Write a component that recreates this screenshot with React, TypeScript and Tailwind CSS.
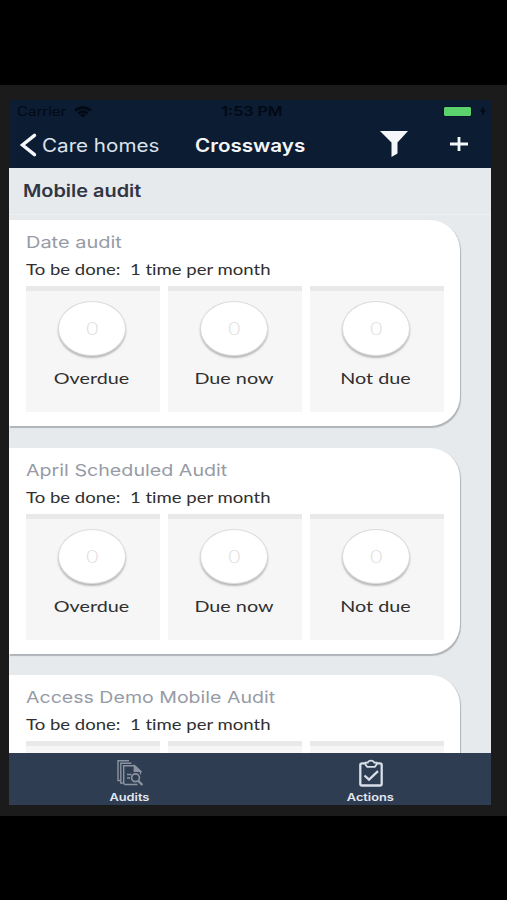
import type { ReactNode } from "react";

type Audit = {
  id: number;
  title: string;
  titleScale: string;
  frequency: string;
  overdue: number;
  dueNow: number;
  notDue: number;
};

const audits: Audit[] = [
  { id: 1, title: "Date audit", titleScale: "scale-x-[1.21]", frequency: "1 time per month", overdue: 0, dueNow: 0, notDue: 0 },
  { id: 2, title: "April Scheduled Audit", titleScale: "scale-x-[1.192]", frequency: "1 time per month", overdue: 0, dueNow: 0, notDue: 0 },
  { id: 3, title: "Access Demo Mobile Audit", titleScale: "scale-x-[1.185]", frequency: "1 time per month", overdue: 0, dueNow: 0, notDue: 0 },
];

function StatusBar() {
  return (
    <div className="grid h-[22px] grid-cols-3 items-center pl-2 pr-1 text-[12.5px] text-[#020913]">
      <div className="flex items-center pt-0.5">
        <span className="w-[57px]">
          <span className="inline-block origin-left scale-x-[1.2]">Carrier</span>
        </span>
        <svg viewBox="0 0 18 12" className="h-3 w-[18px]" fill="none" stroke="currentColor" strokeWidth="2.6">
          <path d="M1.2 4.6C5.8.6 12.2.6 16.8 4.6" />
          <path d="M4.3 7.5c2.8-2.3 6.6-2.3 9.4 0" />
          <path d="M6.2 9 9 11.6 11.8 9C9.9 7.8 8.1 7.8 6.2 9Z" fill="currentColor" stroke="none" />
        </svg>
      </div>
      <span className="justify-self-center pt-0.5">
        <span className="inline-block scale-x-[1.28] font-semibold">1:53 PM</span>
      </span>
      <div className="flex items-center justify-end gap-2">
        <span className="h-[9px] w-[27px] rounded-[1px] bg-[#5bd26b] outline outline-[#07182a]" />
        <svg viewBox="0 0 8 10" className="h-2.5 w-2" fill="currentColor">
          <path d="M5 0 1 5.6h2.5L2.5 10 7 4.2H4.3Z" />
        </svg>
      </div>
    </div>
  );
}

function NavBar() {
  return (
    <div className="flex h-[46px] items-center text-[18px] text-[#f4f6f9]">
      <svg
        viewBox="0 0 18 24"
        className="ml-2.5 h-6 w-[18px]"
        fill="none"
        stroke="currentColor"
        strokeWidth="3.4"
        strokeLinecap="round"
      >
        <path d="M15.5 2.4 3.5 12l12 9.6" />
      </svg>
      <span className="ml-[5px] w-[153px]">
        <span className="inline-block origin-left scale-x-[1.145] text-[#dde3ec]">Care homes</span>
      </span>
      <span className="w-[185px]">
        <span className="inline-block origin-left scale-x-[1.145] font-semibold">Crossways</span>
      </span>
      <svg viewBox="0 0 28 26" className="mb-0.5 h-[26px] w-7" fill="currentColor">
        <path d="M0 0h28L17.5 11.5v11L11.5 26V11.5Z" />
      </svg>
      <svg viewBox="0 0 18 14" className="mb-0.5 ml-[42px] h-3.5 w-[18px]" stroke="currentColor" strokeWidth="2.8">
        <path d="M0 7h18M9 0v14" />
      </svg>
    </div>
  );
}

function CountTile({ count, label }: { count: number; label: string }) {
  return (
    <div className="flex h-[126px] w-[134px] flex-col items-center border-t-[5px] border-[#e9e9e9] bg-[#f6f6f6] pt-2.5 font-[Lato,sans-serif]">
      <div className="-ml-0.5 flex h-[55px] w-[68px] items-center justify-center rounded-[50%] border border-[#dcdcdc] bg-white shadow-[0_2px_2px_rgba(0,0,0,0.26)]">
        <span className="scale-x-[1.15] text-[18px] font-light text-[#dcdcdc]">{count}</span>
      </div>
      <span className="mt-2.5 -ml-[2px] scale-x-[1.235] text-[16px] leading-6 whitespace-nowrap text-[#303030]">{label}</span>
    </div>
  );
}

function AuditCard({ audit }: { audit: Audit }) {
  return (
    <div className="mb-[21.5px] h-[206px] w-[451px] shrink-0 rounded-r-[30px] bg-white pt-3 pl-[17px] shadow-[1px_1.5px_1px_#b0b4b7]">
      <p className="h-5 text-[16.5px] leading-5 text-[#969ba6]">
        <span className={`inline-block origin-left whitespace-nowrap ${audit.titleScale}`}>{audit.title}</span>
      </p>
      <p className="mt-[7px] h-5 font-[Lato,sans-serif] text-[15px] leading-5 text-[#303030]">
        <span className="inline-block origin-left scale-x-[1.235] whitespace-pre [font-variant-ligatures:none]">
          To be done:{"  "}{audit.frequency}
        </span>
      </p>
      <div className="mt-[7px] flex gap-2">
        <CountTile count={audit.overdue} label="Overdue" />
        <CountTile count={audit.dueNow} label="Due now" />
        <CountTile count={audit.notDue} label="Not due" />
      </div>
    </div>
  );
}

function Tab({ label, children }: { label: string; children: ReactNode }) {
  return (
    <div className="flex w-[241px] flex-col items-center pt-[6px]">
      {children}
      <span className="mt-[5px] scale-x-[1.22] text-[10.5px] leading-3 font-semibold text-[#e3e8ef]">{label}</span>
    </div>
  );
}

function TabBar() {
  return (
    <div className="flex h-[52px] shrink-0 bg-[#2f3d53]">
      <Tab label="Audits">
        <svg viewBox="0 0 26 28" className="h-7 w-[26px]" fill="none" stroke="#8b93a0" strokeWidth="1.4">
          <path d="M3.2 21.5H1V1.8h11" />
          <path d="M6 24H3.8V4.2h10.7" />
          <path d="M20.5 25.5H8.500A1.800 1.800 0 0 1 6.700 23.700V6.700h11l5.800 5.500v3" />
          <path d="M17.300 6.700v5.500h6.200Z" fill="#8b93a0" />
          <path d="M10 15.500h4.500M10 19h3" />
          <circle cx="18.500" cy="18.800" r="3.900" strokeWidth="1.700" />
          <path d="m21.400 22 4 4" strokeWidth="2.400" />
        </svg>
      </Tab>
      <Tab label="Actions">
        <svg viewBox="0 0 26 28" className="h-7 w-[26px]" fill="none" stroke="#d8dfe9" strokeWidth="2.3">
          <path d="M7.500 4.300H4A1.700 1.700 0 0 0 2.300 6v18.800a1.700 1.700 0 0 0 1.700 1.700h18a1.700 1.700 0 0 0 1.700-1.700V6A1.700 1.700 0 0 0 22 4.300H18.500" />
          <path d="M7.500 3.600h2.300c.8-2.600 5.600-2.600 6.400 0h2.300v2L16.800 7.800H9.200L7.500 5.600Z" strokeWidth="1.700" />
          <path d="m6.500 16.500 4.500 4.200 9-8.500" />
        </svg>
      </Tab>
    </div>
  );
}

export default function App() {
  return (
    <div className="h-[900px] w-[507px] overflow-hidden bg-black pt-[85px] font-[Inter,sans-serif]">
      <div className="h-[731px] bg-[#1b1b1b] pt-[15px] pl-[9px]">
        <div className="flex h-[705px] w-[482px] flex-col overflow-hidden bg-[#e6eaed]">
          <div className="h-[68px] shrink-0 bg-[#0b1c33]">
            <StatusBar />
            <NavBar />
          </div>
          <div className="mb-[5px] flex h-[47px] shrink-0 items-center border-b border-[#eceff3] pt-px pl-3.5 text-[17px] font-semibold text-[#303644]">
            <span className="inline-block origin-left scale-x-[1.17]">Mobile audit</span>
          </div>
          <div className="flex min-h-0 flex-1 flex-col overflow-y-auto [scrollbar-width:none]">
            {audits.map((audit) => (
              <AuditCard key={audit.id} audit={audit} />
            ))}
          </div>
          <TabBar />
        </div>
      </div>
    </div>
  );
}
